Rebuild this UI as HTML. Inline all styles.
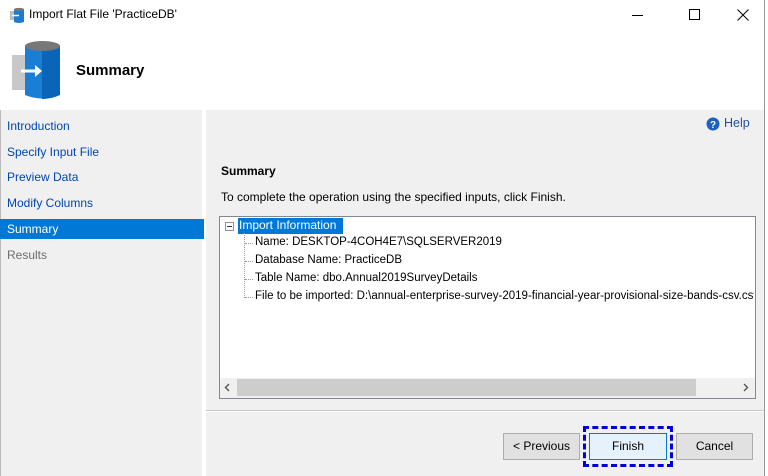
<!DOCTYPE html>
<html><head><meta charset="utf-8"><style>
*{margin:0;padding:0;box-sizing:border-box}
body{width:768px;height:476px;overflow:hidden;background:#fff;font-family:"Segoe UI","Liberation Sans",sans-serif;font-size:12px;color:#000;position:relative}
.a{position:absolute}
.nav{color:#0046b4;font-size:12px;left:7px}
.t{font-size:11.5px}
</style></head><body>
<svg class="a" style="left:9px;top:7px" width="16" height="17" viewBox="0 0 16 17"><rect x="1" y="4" width="6" height="9" fill="#bbb"/><path d="M5 2 Q10 0 15 2 V15 Q10 17 5 15Z" fill="#1e7bd0"/><ellipse cx="10" cy="2.5" rx="5" ry="1.6" fill="#777"/><path d="M3 8.5h7" stroke="#fff" stroke-width="1.5"/></svg>
<div class="a" style="left:29px;top:7px;font-size:12px">Import Flat File 'PracticeDB'</div>
<div class="a" style="left:632px;top:15px;width:11px;height:1px;background:#000"></div>
<div class="a" style="left:689px;top:9px;width:11px;height:11px;border:1px solid #000"></div>
<svg class="a" style="left:737px;top:9px" width="12" height="12"><path d="M0.5 0.5L11.5 11.5M11.5 0.5L0.5 11.5" stroke="#000" stroke-width="1"/></svg>
<svg class="a" style="left:11px;top:39px" width="52" height="64" viewBox="0 0 52 64"><rect x="1" y="16" width="23" height="35" fill="#c8c8c8"/><path d="M14 7 Q31 0 49 7 V56 Q31 63 14 56Z" fill="#1a7fd4"/><path d="M31 4 Q40 4 49 7 V56 Q40 60 31 60Z" fill="#0a64b8"/><ellipse cx="31.5" cy="7" rx="17.5" ry="5" fill="#777"/><path d="M10 32h17" stroke="#fff" stroke-width="3"/><path d="M24 26l7 6-7 6z" fill="#fff"/></svg>
<div class="a" style="left:76px;top:62px;font-size:15px;font-weight:bold">Summary</div>
<div class="a" style="left:0;top:110px;width:202px;height:366px;background:#f0f0f0;border-left:1px solid #bbb"></div>
<div class="a" style="left:206px;top:110px;width:558px;height:366px;background:#f0f0f0"></div>
<div class="a" style="left:764px;top:0;width:1px;height:476px;background:#999"></div>
<div class="a nav" style="top:119px">Introduction</div>
<div class="a nav" style="top:145px">Specify Input File</div>
<div class="a nav" style="top:170px">Preview Data</div>
<div class="a nav" style="top:196px">Modify Columns</div>
<div class="a" style="left:0;top:219px;width:204px;height:20px;background:#0078d7"></div>
<div class="a nav" style="top:222px;color:#fff">Summary</div>
<div class="a nav" style="top:248px;color:#6d6d6d">Results</div>
<svg class="a" style="left:706px;top:117px" width="14" height="14"><circle cx="7" cy="7" r="6.5" fill="#1f5fbf"/><text x="7" y="11" font-size="10" font-weight="bold" fill="#fff" text-anchor="middle" font-family="Liberation Sans">?</text></svg>
<div class="a" style="left:724px;top:116px;color:#1f4fa0;font-size:12.5px">Help</div>
<div class="a" style="left:221px;top:164px;font-weight:bold">Summary</div>
<div class="a" style="left:221px;top:190px">To complete the operation using the specified inputs, click Finish.</div>
<div class="a" style="left:219px;top:216px;width:537px;height:183px;background:#fff;border:1px solid #828790"></div>
<div class="a" style="left:225px;top:222px;width:9px;height:9px;border:1px solid #919191;background:#fff"></div>
<div class="a" style="left:227px;top:226px;width:5px;height:1px;background:#333"></div>
<div class="a" style="left:238px;top:218px;width:105px;height:16px;background:#0078d7"></div>
<div class="a" style="left:239px;top:218px;color:#fff">Import Information</div>
<div class="a" style="left:244px;top:233px;width:0;height:65px;border-left:1px dotted #999"></div>
<div class="a" style="left:245px;top:243px;width:8px;border-top:1px dotted #999"></div>
<div class="a" style="left:245px;top:261px;width:8px;border-top:1px dotted #999"></div>
<div class="a" style="left:245px;top:279px;width:8px;border-top:1px dotted #999"></div>
<div class="a" style="left:245px;top:297px;width:8px;border-top:1px dotted #999"></div>
<div class="a t" style="left:255px;top:236px">Name: DESKTOP-4COH4E7\SQLSERVER2019</div>
<div class="a t" style="left:255px;top:254px">Database Name: PracticeDB</div>
<div class="a t" style="left:255px;top:272px">Table Name: dbo.Annual2019SurveyDetails</div>
<div class="a t" style="left:255px;top:290px;white-space:nowrap;width:499px;overflow:hidden">File to be imported: D:\annual-enterprise-survey-2019-financial-year-provisional-size-bands-csv.csv</div>
<div class="a" style="left:220px;top:378px;width:535px;height:20px;background:#f0f0f0"></div>
<div class="a" style="left:237px;top:379px;width:459px;height:17px;background:#cdcdcd"></div>
<svg class="a" style="left:224px;top:383px" width="6" height="9"><path d="M5 1L1.5 4.5L5 8" stroke="#555" stroke-width="1.4" fill="none"/></svg>
<svg class="a" style="left:743px;top:383px" width="6" height="9"><path d="M1 1L4.5 4.5L1 8" stroke="#555" stroke-width="1.4" fill="none"/></svg>
<div class="a" style="left:206px;top:410px;width:558px;height:1px;background:#c8c8c8"></div>
<div class="a" style="left:206px;top:411px;width:558px;height:1px;background:#fff"></div>
<div class="a" style="left:503px;top:433px;width:77px;height:27px;background:#e1e1e1;border:1px solid #adadad;text-align:center;line-height:25px">&lt; Previous</div>
<div class="a" style="left:583px;top:426px;width:90px;height:41px;border:3px dashed #0000d8"></div>
<div class="a" style="left:589px;top:433px;width:78px;height:27px;background:#e5f1fb;border:1px solid #0078d7;text-align:center;line-height:25px">Finish</div>
<div class="a" style="left:676px;top:433px;width:77px;height:27px;background:#e1e1e1;border:1px solid #adadad;text-align:center;line-height:25px">Cancel</div>
</body></html>
